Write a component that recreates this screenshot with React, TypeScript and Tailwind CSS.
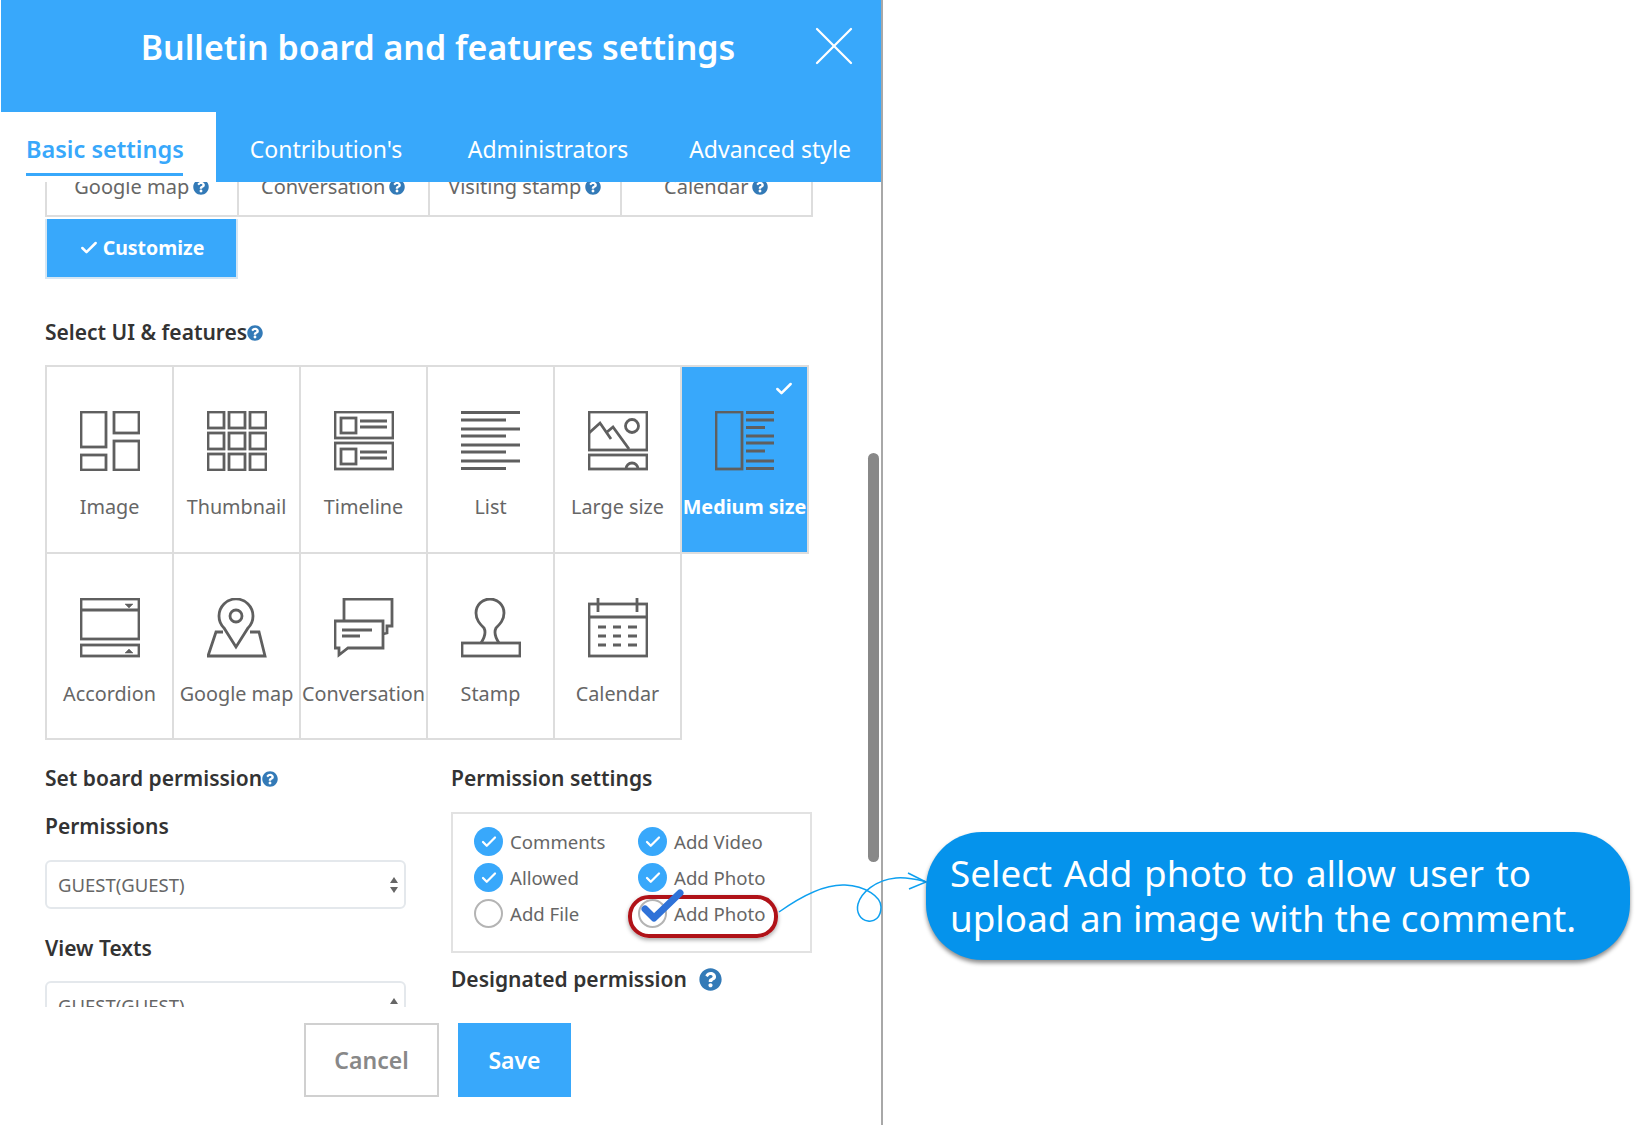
import type { ReactNode } from 'react'
import { Check, X } from 'lucide-react'
import { FaQuestionCircle } from 'react-icons/fa'

const ImageIcon = () => (
  <>
    <rect x="1" y="1" width="25" height="35" />
    <rect x="34" y="1" width="25" height="21" />
    <rect x="1" y="44" width="25" height="15" />
    <rect x="34" y="30" width="25" height="29" />
  </>
)

const ThumbnailIcon = () => (
  <>
    {[1, 22, 43].map((y) =>
      [1, 22, 43].map((x) => <rect key={`${x}-${y}`} x={x} y={y} width="16" height="16" />),
    )}
  </>
)

const TimelineIcon = () => (
  <>
    <rect x="1" y="1" width="58" height="26" />
    <rect x="1" y="32" width="58" height="26" />
    <rect x="7" y="7" width="15" height="15" />
    <rect x="7" y="38" width="15" height="15" />
    <path d="M26 10h27M26 16h27M26 41h27M26 47h27" />
  </>
)

const ListIcon = () => (
  <path d="M0 1.5h59M0 9h45M0 18h59M0 25h45M0 34h59M0 41h45M0 50h59M0 57.5h45" />
)

const LargeIcon = () => (
  <>
    <rect x="1" y="1" width="58" height="38" />
    <rect x="1" y="44" width="58" height="14" />
    <circle cx="44" cy="15" r="6.5" />
    <path d="M1 22L12 12l11 16M19 21l6-5 16 22M38 58a6 6 0 0 1 12 0" />
  </>
)

const MediumIcon = () => (
  <>
    <rect x="1" y="1" width="26" height="57" />
    <path d="M31 1.5h28M31 9h28M31 16.5h19M31 25h28M31 32h28M31 40h19M31 50h28M31 57.5h28" />
  </>
)

const AccordionIcon = () => (
  <>
    <rect x="1" y="1" width="58" height="40" />
    <path d="M1 12h58" />
    <rect x="1" y="47" width="58" height="11" />
    <path d="M45 6h8l-4 4zM45 55h8l-4-4z" fill="#5f5f5f" strokeWidth="0.5" />
  </>
)

const MapIcon = () => (
  <>
    <path d="M29 49L17 30a17 17 0 1 1 24 0z" />
    <circle cx="29" cy="18" r="6" />
    <path d="M16 34H9L1 58h57l-6-24h-9" />
  </>
)

const ConversationIcon = () => (
  <>
    <path d="M10 22V1h48v27h-5v7l-4 1" />
    <path d="M1 23h48v27H14l-9 7v-7H1z" />
    <path d="M8 32h30M8 38h18" />
  </>
)

const StampIcon = () => (
  <>
    <rect x="1" y="45" width="58" height="13" />
    <path d="M20 45c4-6 5-11 3-15-4-4-8-8-8-15a14 14 0 0 1 28 0c0 7-4 11-8 15-2 4-1 9 3 15" />
  </>
)

const CalendarIcon = () => (
  <>
    <rect x="1" y="6" width="58" height="52" />
    <path d="M1 19h58M10 0v14M49 0v14" />
    <path d="M10 29h8M25 29h8M40 29h9M10 38h8M25 38h8M40 38h9M10 47h8M25 47h8M40 47h9" />
  </>
)

const layouts = [
  { label: 'Image', icon: <ImageIcon /> },
  { label: 'Thumbnail', icon: <ThumbnailIcon /> },
  { label: 'Timeline', icon: <TimelineIcon /> },
  { label: 'List', icon: <ListIcon /> },
  { label: 'Large size', icon: <LargeIcon /> },
  { label: 'Medium size', icon: <MediumIcon />, active: true },
  { label: 'Accordion', icon: <AccordionIcon /> },
  { label: 'Google map', icon: <MapIcon /> },
  { label: 'Conversation', icon: <ConversationIcon /> },
  { label: 'Stamp', icon: <StampIcon /> },
  { label: 'Calendar', icon: <CalendarIcon /> },
]

const permissions = [
  { label: 'Comments', checked: true },
  { label: 'Add Video', checked: true },
  { label: 'Allowed', checked: true },
  { label: 'Add Photo', checked: true },
  { label: 'Add File', checked: false },
  { label: 'Add Photo', checked: false },
]

function Help({ size = 16 }: { size?: number }) {
  return <FaQuestionCircle size={size} className="inline-block shrink-0 text-[#337ab7]" />
}

function Heading({ children }: { children: ReactNode }) {
  return (
    <div className="flex h-6 items-center pt-0.5 text-[21px] font-semibold whitespace-nowrap text-[#333]">
      {children}
    </div>
  )
}

function Select({ arrows = 'both' }: { arrows?: 'both' | 'up' }) {
  return (
    <div className="flex h-[49px] w-[361px] shrink-0 items-center justify-between rounded-[6px] border-2 border-[#e4e8ec] pr-[5px] pl-[11px] text-[18.5px] text-[#666]">
      <span>GUEST(GUEST)</span>
      <svg width="10" height="18" viewBox="0 0 10 18" fill="#666">
        <path d="M5 1l4 6H1z" />
        {arrows === 'both' && <path d="M5 17l4-6H1z" />}
      </svg>
    </div>
  )
}

function Tab({ label, width }: { label: string; width: string }) {
  return (
    <div className={`flex h-full items-center justify-center pt-1 text-[23px] text-white ${width}`}>
      {label}
    </div>
  )
}

export default function App() {
  return (
    <div className="relative h-[1125px] w-[1639px] overflow-hidden bg-white font-['Noto_Sans',sans-serif]">
      <div className="flex h-full w-[883px] flex-col border-r-2 border-l border-r-[#a8a8a8] border-l-white">
        <header className="h-[182px] shrink-0 bg-[#38a8fb]">
          <div className="relative flex h-[112px] items-start justify-center pt-[22px] pr-[6px]">
            <h1 className="text-[33.9px] leading-[50px] font-semibold text-white">
              Bulletin board and features settings
            </h1>
            <X
              size={68}
              strokeWidth={0.8}
              className="absolute top-[12px] right-[13px] text-white"
            />
          </div>
          <div className="flex h-[70px]">
            <div className="flex h-full w-[215px] flex-col bg-white pt-[21px] pl-[25px]">
              <span className="text-[23.5px] leading-[32px] font-semibold whitespace-nowrap text-[#38a8fb]">
                Basic settings
              </span>
              <div className="mt-[8px] h-[3px] w-[157px] bg-[#38a8fb]" />
            </div>
            <Tab label="Contribution's" width="w-[220px]" />
            <Tab label="Administrators" width="w-[224px]" />
            <Tab label="Advanced style" width="w-[220px]" />
          </div>
        </header>

        <main className="h-[825px] shrink-0 overflow-hidden pl-[44px]">
          <div className="-mt-[25px]">
            <div className="grid w-[766px] grid-cols-4">
              {['Google map', 'Conversation', 'Visiting stamp', 'Calendar'].map((item) => (
                <div
                  key={item}
                  className="-mr-0.5 flex h-[60px] items-center justify-center gap-1 border-2 border-[#ddd] text-[20px] text-[#666]"
                >
                  {item}
                  <Help />
                </div>
              ))}
            </div>
            <div className="mt-0.5 flex h-[60px] w-[193px] items-center justify-center gap-1 border-x-2 border-b-2 border-[#d5e6f3] bg-[#38a8fb] text-[19.5px] font-bold text-white">
              <Check size={20} strokeWidth={3} />
              Customize
            </div>

            <div className="mt-[41px]">
              <Heading>
                Select UI &amp; features
                <Help />
              </Heading>
            </div>

            <div className="mt-[21px] grid grid-cols-[repeat(6,127px)] grid-rows-[186.5px_186.5px]">
              {layouts.map((item) => (
                <div
                  key={item.label}
                  className={`relative flex h-[188.5px] w-[129px] flex-col items-center border-2 border-[#ddd] pt-[44px] ${
                    item.active ? 'bg-[#38a8fb]' : ''
                  }`}
                >
                  {item.active && (
                    <Check size={20} strokeWidth={3} className="absolute top-[12px] right-[13px] text-white" />
                  )}
                  <svg
                    width="60"
                    height="60"
                    viewBox="0 0 60 60"
                    fill="none"
                    stroke="#5f5f5f"
                    strokeWidth="2.8"
                  >
                    {item.icon}
                  </svg>
                  <span
                    className={`mt-[22px] text-[19.8px] leading-[28px] whitespace-nowrap ${
                      item.active ? 'font-bold text-white' : 'text-[#666]'
                    }`}
                  >
                    {item.label}
                  </span>
                </div>
              ))}
            </div>

            <div className="mt-[28px] flex gap-[45px]">
              <div className="flex w-[361px] flex-col">
                <Heading>
                  Set board permission
                  <Help />
                </Heading>
                <div className="mt-6">
                  <Heading>Permissions</Heading>
                </div>
                <div className="mt-[22px]">
                  <Select />
                </div>
                <div className="mt-[27px]">
                  <Heading>View Texts</Heading>
                </div>
                <div className="mt-[21px]">
                  <Select arrows="up" />
                </div>
              </div>

              <div className="flex w-[361px] flex-col">
                <Heading>Permission settings</Heading>
                <div className="mt-[22px] grid h-[141px] grid-cols-[164px_1fr] content-start gap-y-[7px] border-2 border-[#e2e2e2] pt-[13px] pl-[21px]">
                  {permissions.map((item, i) => (
                    <div key={i} className="flex h-[29px] items-center gap-[7px]">
                      {item.checked ? (
                        <span className="flex size-[29px] items-center justify-center rounded-full bg-[#38a8fb]">
                          <Check size={18} strokeWidth={3} className="text-white" />
                        </span>
                      ) : (
                        <span className="size-[29px] rounded-full border-2 border-[#b4b4b4]" />
                      )}
                      <span className="text-[18.6px] text-[#666]">{item.label}</span>
                    </div>
                  ))}
                </div>
                <div className="mt-[14px] flex items-center gap-3">
                  <Heading>Designated permission</Heading>
                  <Help size={23} />
                </div>
              </div>
            </div>
          </div>
        </main>

        <footer className="flex gap-[19px] pt-4 pl-[303px]">
          <button className="h-[74px] w-[135px] border-2 border-[#d0d0d0] text-[23px] font-semibold text-[#888]">
            Cancel
          </button>
          <button className="h-[74px] w-[113px] bg-[#38a8fb] text-[23px] font-semibold text-white">
            Save
          </button>
        </footer>
      </div>

      {/* scrollbar thumb */}
      <div className="absolute top-[453px] left-[868px] h-[409px] w-[11px] rounded-full bg-[#888]" />

      {/* annotations drawn over the screen */}
      <div className="absolute top-[895px] left-[628px] h-[43px] w-[150px] rounded-[21px] border-4 border-[#b01218] shadow-[0_2px_4px_rgba(0,0,0,0.35)]" />
      <svg className="absolute inset-0" width="1639" height="1125" viewBox="0 0 1639 1125" fill="none">
        <path
          d="M645 909L654 918L680 893"
          stroke="#2f72d8"
          strokeWidth="7"
          strokeLinejoin="round"
          strokeLinecap="round"
        />
        <path
          d="M779 912C800 897 825 884 845 885C866 886 881 897 881 907C881 918 874 922 868 921C860 920 856 912 858 904C861 893 875 880 896 878C906 877 915 879 925 881.5"
          stroke="#0ea0f0"
          strokeWidth="1.5"
        />
        <path d="M908 873L926 882L909 889" stroke="#0ea0f0" strokeWidth="1.5" />
      </svg>

      <div className="absolute top-[832px] left-[926px] flex h-[128px] w-[704px] flex-col justify-center rounded-[56px] bg-[#0593ec] pl-[24px] text-[36.8px] leading-[45px] whitespace-nowrap text-white shadow-[0_3px_4px_rgba(0,0,0,0.45)]">
        <span className="[word-spacing:2px]">Select Add photo to allow user to</span>
        <span>upload an image with the comment.</span>
      </div>
    </div>
  )
}
